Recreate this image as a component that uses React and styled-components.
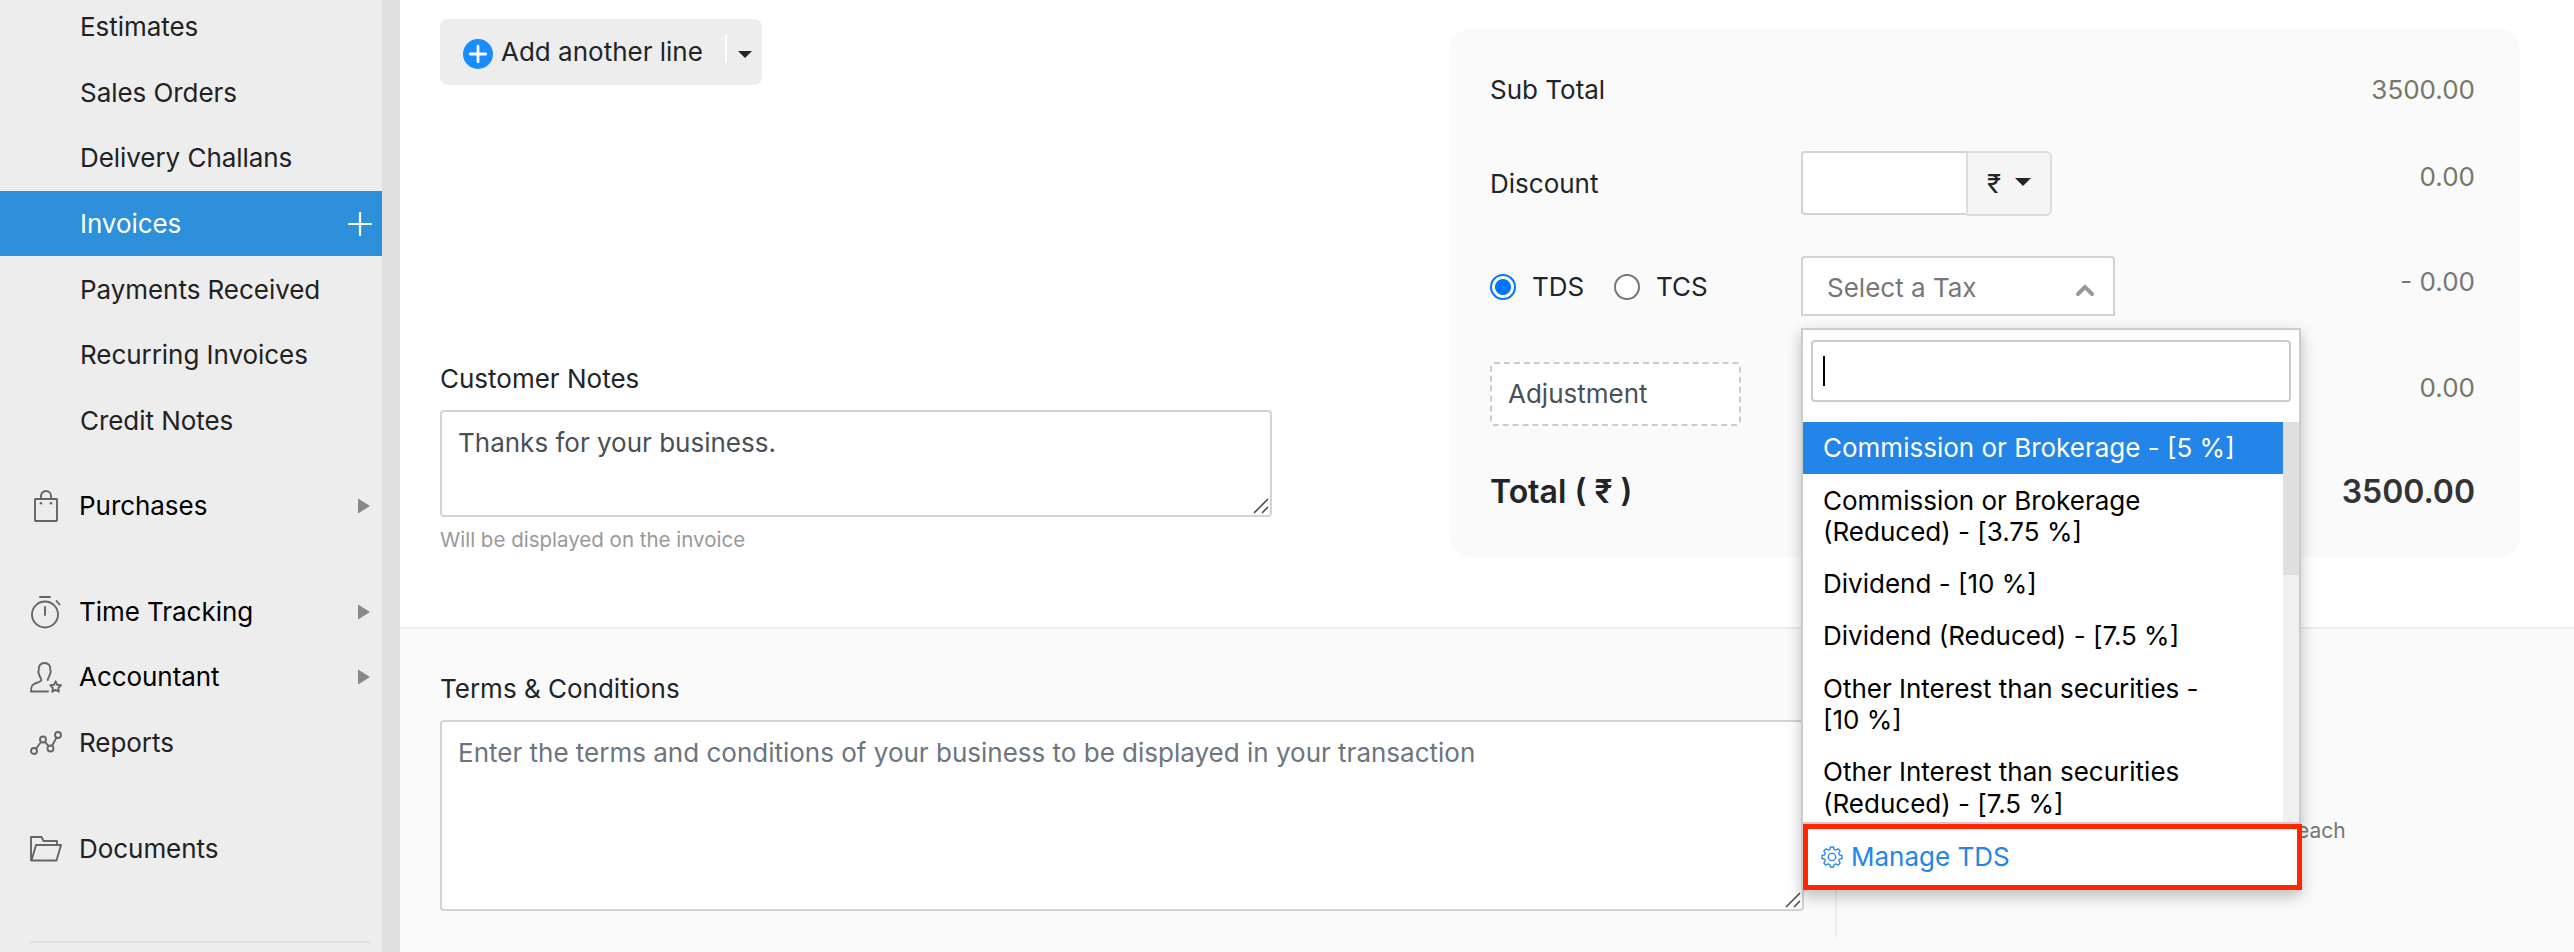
import React, { useState } from 'react'
import styled, { createGlobalStyle } from 'styled-components'

const salesLinks = [
    'Estimates',
    'Sales Orders',
    'Delivery Challans',
    'Invoices',
    'Payments Received',
    'Recurring Invoices',
    'Credit Notes',
]

const taxes = [
    'Commission or Brokerage - [5 %]',
    'Commission or Brokerage (Reduced) - [3.75 %]',
    'Dividend - [10 %]',
    'Dividend (Reduced) - [7.5 %]',
    'Other Interest than securities - [10 %]',
    'Other Interest than securities (Reduced) - [7.5 %]',
]

const BagIcon = () => (
    <LineIcon width='32' height='34' viewBox='0 0 32 34'>
        <rect x='5' y='10' width='22' height='22' rx='0.5' />
        <path d='M11 10V7a5 5 0 0 1 10 0v3' />
        <circle cx='11' cy='14.2' r='1.3' fill='#666' stroke='none' />
        <circle cx='21' cy='14.2' r='1.3' fill='#666' stroke='none' />
    </LineIcon>
)

const ClockIcon = () => (
    <LineIcon width='32' height='34' viewBox='0 0 32 34'>
        <circle cx='15' cy='19.5' r='13' />
        <path d='M15 12v8M10 2h10M26.5 6l3 3.5' />
    </LineIcon>
)

const AccountantIcon = () => (
    <LineIcon width='32' height='34' viewBox='0 0 32 34'>
        <path d='M18 31.5H1c0-5 .8-6.700 3.700-7.900 3-1.200 6.300-1.600 6.600-3.400.3-1.400-.8-2.400-1.700-4.200-.5-1-.6-1.900-.6-2.400-1-.9-.9-2.400-.2-3C8.300 5.500 10.600 3 14.500 3s6.300 2.500 5.800 7.600c.7.6.8 2.100-.3 3 0 .5-.2 1.400-.6 2.400-.8 1.800-1.900 2.700-1.600 4' />
        <path d='M25.600 21.300l1.600 3.500 3.800.5-2.700 2.700.6 3.700-3.300-1.800-3.300 1.800.6-3.700-2.700-2.700 3.800-.5z' />
    </LineIcon>
)

const ReportsIcon = () => (
    <LineIcon width='32' height='34' viewBox='0 0 32 34'>
        <circle cx='4' cy='25' r='3' />
        <circle cx='13' cy='13.5' r='3' />
        <circle cx='20.5' cy='22.5' r='3' />
        <circle cx='28' cy='9' r='3' />
        <path d='M6 22.700l5-6.700M15 15.800l3.600 4.300M22 19.800l4.600-8.200' />
    </LineIcon>
)

const FolderIcon = () => (
    <LineIcon width='32' height='34' viewBox='0 0 32 34'>
        <path d='M1 28V5h10.500l2 4H27v4' />
        <path d='M1.500 28.500L6 13h25l-4.500 15.500z' />
    </LineIcon>
)

const GearIcon = () => (
    <svg width='22' height='22' viewBox='0 0 22 22' fill='none' stroke='#2485e8' strokeWidth='1.3' strokeLinejoin='round'>
        <circle cx='11' cy='11' r='3.7' />
        <path d='M9.500 1h3l.6 2.500 1.700.7 2.200-1.400 2.200 2.200-1.400 2.200.7 1.700 2.500.6v3l-2.500.6-.7 1.700 1.400 2.200-2.200 2.200-2.200-1.400-1.700.7-.6 2.500h-3l-.6-2.500-1.700-.7L5 19.200 2.800 17l1.400-2.200-.7-1.700L1 12.500v-3l2.500-.6.7-1.700L2.800 5 5 2.800l2.200 1.400 1.700-.7z' />
    </svg>
)

const Grip = () => (
    <GripIcon width='16' height='16' viewBox='0 0 16 16' fill='none' stroke='#444' strokeWidth='1.5'>
        <path d='M1 15L15 1M9 15l6-6' />
    </GripIcon>
)

const moreLinks = [
    { id: 1, label: 'Purchases', icon: <BagIcon />, arrow: true, gap: 19.6 },
    { id: 2, label: 'Time Tracking', icon: <ClockIcon />, arrow: true, gap: 40.3 },
    { id: 3, label: 'Accountant', icon: <AccountantIcon />, arrow: true, gap: 0 },
    { id: 4, label: 'Reports', icon: <ReportsIcon />, gap: 0 },
    { id: 5, label: 'Documents', icon: <FolderIcon />, gap: 40 },
]

const Sidebar = () => {
    return (
        <Nav>
            {salesLinks.map((item) => (
                <SubLink key={item} $active={item === 'Invoices'}>
                    {item}
                    {item === 'Invoices' && (
                        <svg width='24' height='24' viewBox='0 0 24 24' stroke='#fff' strokeWidth='2.2' strokeLinecap='round'>
                            <path d='M12 1v22M1 12h22' />
                        </svg>
                    )}
                </SubLink>
            ))}
            {moreLinks.map(({ id, label, icon, arrow, gap }) => (
                <MainLink key={id} $gap={gap} $dark={arrow}>
                    {icon}
                    <span>{label}</span>
                    {arrow && (
                        <svg width='12' height='16' viewBox='0 0 12 16' fill='#888'>
                            <path d='M0 0.5l12 7.5-12 7.5z' />
                        </svg>
                    )}
                </MainLink>
            ))}
            <NavDivider />
        </Nav>
    )
}

const TaxSelect = () => {
    const [selected, setSelected] = useState(0)
    return (
        <SelectWrapper>
            <SelectBox>
                Select a Tax
                <svg width='20' height='14' viewBox='0 0 20 14' fill='none' stroke='#999' strokeWidth='4' strokeLinecap='round'>
                    <path d='M3 11l7-7 7 7' />
                </svg>
            </SelectBox>
            <Dropdown>
                <SearchBox>
                    <Cursor />
                </SearchBox>
                <OptionArea>
                    <Options>
                        {taxes.map((tax, index) => (
                            <Option key={tax} $active={index === selected} onMouseEnter={() => setSelected(index)}>
                                {tax}
                            </Option>
                        ))}
                    </Options>
                    <Track>
                        <Thumb />
                    </Track>
                </OptionArea>
                <Manage>
                    <GearIcon />
                    Manage TDS
                </Manage>
            </Dropdown>
        </SelectWrapper>
    )
}

const Totals = () => {
    return (
        <Panel>
            <TotalRow $height={40}>
                <Label>Sub Total</Label>
                <Amount>3500.00</Amount>
            </TotalRow>
            <TotalRow $height={65} $gap={41}>
                <Label>Discount</Label>
                <DiscountGroup>
                    <DiscountInput />
                    <Currency>
                        ₹
                        <Caret width='16' height='8' viewBox='0 0 16 8'>
                            <path d='M0 0h16l-8 8z' />
                        </Caret>
                    </Currency>
                </DiscountGroup>
                <Amount $raise={14}>0.00</Amount>
            </TotalRow>
            <TotalRow $height={60} $gap={40}>
                <Label $drop={2}>
                    <Radio $checked />
                    <RadioText>TDS</RadioText>
                    <Radio />
                    <RadioText>TCS</RadioText>
                </Label>
                <TaxSelect />
                <Amount $raise={8} $color='#777'>- 0.00</Amount>
            </TotalRow>
            <TotalRow $height={64} $gap={46}>
                <Adjustment>Adjustment</Adjustment>
                <Amount $raise={13}>0.00</Amount>
            </TotalRow>
            <TotalRow $height={44} $gap={44} $strong>
                <Label>Total ( ₹ )</Label>
                <Amount $color='#333'>3500.00</Amount>
            </TotalRow>
        </Panel>
    )
}

const App = () => {
    return (
        <>
            <GlobalStyle />
            <Page>
                <Sidebar />
                <Gutter />
                <Main>
                    <Items>
                        <Left>
                            <AddLine>
                                <svg width='30' height='30' viewBox='0 0 30 30'>
                                    <circle cx='15' cy='15' r='15' fill='#198cff' />
                                    <path d='M15 7.2v15.600M7.200 15h15.600' stroke='#fff' strokeWidth='2.8' strokeLinecap='round' />
                                </svg>
                                <span>Add another line</span>
                                <AddSplit />
                                <Caret width='14' height='7' viewBox='0 0 14 7'>
                                    <path d='M0 0h14l-7 7z' />
                                </Caret>
                            </AddLine>
                            <Notes>
                                <FieldTitle>Customer Notes</FieldTitle>
                                <Field $width={832} $height={107}>
                                    Thanks for your business.
                                    <Grip />
                                </Field>
                                <Hint>Will be displayed on the invoice</Hint>
                            </Notes>
                        </Left>
                        <Totals />
                    </Items>
                    <Bottom>
                        <Terms>
                            <FieldTitle>Terms &amp; Conditions</FieldTitle>
                            <Field $width={1364} $height={191} $muted>
                                Enter the terms and conditions of your business to be displayed in your transaction
                                <Grip />
                            </Field>
                        </Terms>
                        <Attach>each</Attach>
                    </Bottom>
                </Main>
            </Page>
        </>
    )
}

const GlobalStyle = createGlobalStyle`
* {
    box-sizing: border-box;
}
body {
    margin: 0;
    background: #fff;
    color: #212529;
    font-family: Inter, sans-serif;
    font-size: 26px;
    line-height: 32px;
}
`

const Page = styled.div`
display: flex;
width: 2574px;
height: 952px;
overflow: hidden;
`

const Nav = styled.nav`
width: 382px;
height: 959px;
margin-top: -6.3px;
background: #ededed;
flex-shrink: 0;
`

const SubLink = styled.div`
display: flex;
align-items: center;
justify-content: space-between;
height: 65.67px;
padding: 1px 10px 0 80px;
letter-spacing: -0.05px;
color: ${({ $active }) => ($active ? '#fff' : '#222')};
background: ${({ $active }) => ($active ? '#2e8fdb' : 'transparent')};
`

const MainLink = styled.div`
display: flex;
align-items: center;
height: 65.67px;
margin-top: ${({ $gap }) => $gap}px;
padding: 0 12px 0 30px;
letter-spacing: -0.05px;
color: ${({ $dark }) => ($dark ? '#000' : '#222')};

span {
    flex: 1;
    margin-left: 17px;
}
`

const LineIcon = styled.svg`
fill: none;
stroke: #666;
stroke-width: 1.9;
stroke-linejoin: round;
stroke-linecap: round;
`

const NavDivider = styled.div`
height: 2px;
margin: 60px 12px 0 30px;
background: #dde2e6;
`

const Gutter = styled.div`
width: 18px;
background: #e0e0e0;
flex-shrink: 0;
`

const Main = styled.main`
flex: 1;
display: flex;
flex-direction: column;
`

const Items = styled.section`
display: flex;
justify-content: space-between;
height: 627px;
padding: 19px 54px 0 40px;
`

const Left = styled.div`
width: 832px;
`

const AddLine = styled.div`
display: flex;
align-items: center;
width: 322px;
height: 66px;
padding-left: 23px;
border-radius: 8px;
background: #ededed;

> svg:first-child {
    margin-top: 4px;
}
span {
    width: 224px;
    margin-left: 8px;
}
> svg:last-child {
    margin: 5px 0 0 11px;
}
`

const AddSplit = styled.div`
width: 2px;
height: 28px;
margin-top: -6px;
background: #fff;
`

const Caret = styled.svg`
fill: #212529;
`

const Notes = styled.div`
margin-top: 278px;
`

const FieldTitle = styled.div`
margin-bottom: 15px;
`

const Field = styled.div`
position: relative;
width: ${({ $width }) => $width}px;
height: ${({ $height }) => $height}px;
padding: 15px 16px;
border: 2px solid #ced4da;
border-radius: 4px;
background: #fff;
color: ${({ $muted }) => ($muted ? '#6c757d' : '#495057')};
`

const GripIcon = styled.svg`
position: absolute;
right: 1px;
bottom: 1px;
`

const Hint = styled.div`
margin-top: 7px;
font-size: 20.5px;
color: #999;
`

const Panel = styled.div`
width: 1070px;
height: 528px;
margin-top: 10px;
padding: 41px 45px 0 40px;
border-radius: 20px;
background: #fafafa;
`

const TotalRow = styled.div`
display: flex;
align-items: center;
height: ${({ $height }) => $height}px;
margin-top: ${({ $gap }) => $gap || 0}px;
font-size: ${({ $strong }) => ($strong ? '32px' : '26px')};
font-weight: ${({ $strong }) => ($strong ? 600 : 400)};
`

const Label = styled.div`
display: flex;
align-items: center;
width: 311px;
padding-top: ${({ $drop }) => $drop || 0}px;
`

const Amount = styled.div`
margin-left: auto;
padding-bottom: ${({ $raise }) => $raise || 0}px;
color: ${({ $color }) => $color || '#777766'};
`

const DiscountGroup = styled.div`
display: flex;
height: 65px;
`

const DiscountInput = styled.input`
width: 165px;
height: 64px;
border: 2px solid #ced4da;
border-right: 0;
border-radius: 4px 0 0 4px;
background: #fff;
`

const Currency = styled.div`
display: flex;
align-items: center;
justify-content: center;
gap: 14px;
width: 86px;
border: 2px solid #ddd;
border-radius: 0 6px 6px 0;
background: #f5f5f5;

svg {
    margin-top: -3px;
}
`

const Radio = styled.div`
width: 26px;
height: 26px;
border: 2px solid ${({ $checked }) => ($checked ? '#0075ff' : '#767676')};
border-radius: 50%;
background: ${({ $checked }) => ($checked ? 'radial-gradient(circle, #0075ff 7.5px, #fff 8.5px)' : '#fff')};
`

const RadioText = styled.span`
width: 82px;
margin-left: 16px;
`

const Adjustment = styled.div`
width: 251px;
height: 64px;
padding: 14px 16px;
border: 2px dashed #ccc;
border-radius: 4px;
background: #fff;
color: #495057;
`

const SelectWrapper = styled.div`
position: relative;
`

const SelectBox = styled.div`
display: flex;
align-items: center;
justify-content: space-between;
width: 314px;
height: 60px;
padding: 3px 18px 0 24px;
border: 2px solid #ced4da;
border-radius: 4px 4px 0 0;
background: #fff;
color: #777;

svg {
    margin-top: 4px;
}
`

const Dropdown = styled.div`
position: absolute;
top: 72px;
left: 0;
z-index: 2;
width: 500px;
border: 2px solid #ccc;
border-bottom: 0;
background: #fff;
color: #000;
box-shadow: 0 6px 14px rgba(0, 0, 0, 0.25);
`

const SearchBox = styled.div`
display: flex;
align-items: center;
height: 62px;
margin: 10px 8px 20px;
padding-left: 10px;
border: 2px solid #ccc;
border-radius: 4px;
`

const Cursor = styled.div`
width: 2px;
height: 30px;
background: #000;
`

const OptionArea = styled.div`
display: flex;
height: 402px;
border-bottom: 2px solid #ccc;
`

const Options = styled.div`
width: 480px;
overflow: hidden;
`

const Option = styled.div`
padding: 10.35px 46px 10.35px 20px;
line-height: 31.5px;
color: ${({ $active }) => ($active ? '#fff' : '#000')};
background: ${({ $active }) => ($active ? '#2485e8' : '#fff')};
`

const Track = styled.div`
flex: 1;
background: #f0f0f0;
`

const Thumb = styled.div`
height: 153px;
background: #dfdfdf;
`

const Manage = styled.div`
display: flex;
align-items: center;
gap: 8px;
height: 66px;
margin: 0 -3px 0 0;
padding-left: 13px;
border: 5px solid #ff2600;
color: #2485e8;
`

const Bottom = styled.section`
display: flex;
flex: 1;
border-top: 2px solid #ededed;
background: #fafafa;
`

const Terms = styled.div`
width: 1437px;
height: 308px;
padding: 44px 0 0 40px;
border-right: 2px solid #ededed;
`

const Attach = styled.div`
padding: 186px 0 0 460px;
font-size: 21px;
color: #777;
`

export default App
